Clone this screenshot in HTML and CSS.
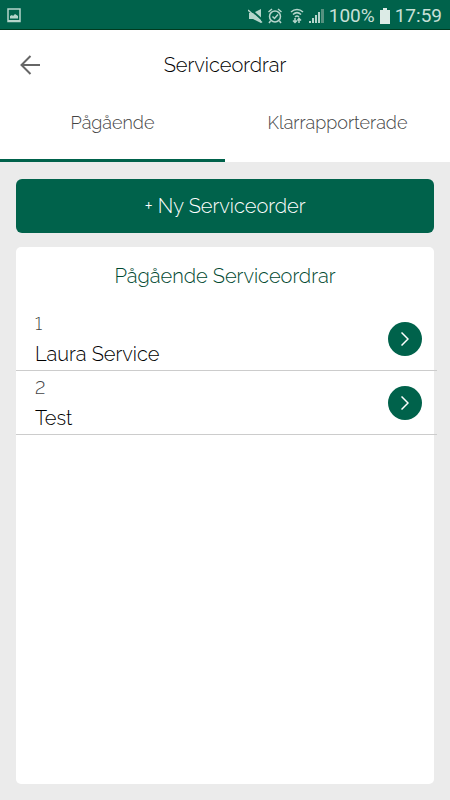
FILE: index.html
```html
<!DOCTYPE html>
<html lang="sv">
<head>
    <meta charset="UTF-8">
    <meta name="viewport" content="width=device-width, initial-scale=1.0">
    <title>Serviceordrar</title>
    <link rel="stylesheet" href="styles.css">
</head>
<body>
    <div class="statusbar">
        <svg class="shot" width="14" height="15" viewBox="0 0 14 15">
            <path d="M1 1h12v12.500H1z" fill="none" stroke="#b5d5cb" stroke-width="1.500"/>
            <path d="M1 12h12v2H1zM3 10.500V8l2-1 1 1 2-2 1.500 1L11 8v2.500z" fill="#b5d5cb"/>
        </svg>
        <div class="status-icons">
            <svg width="15" height="16" viewBox="0 0 15 16">
                <path d="M1 5h4l8-4v14L5 11H1z" fill="#b5d5cb"/>
                <path d="M2 1l13 11.500" stroke="#00624b" stroke-width="2"/>
                <path d="M0 2l14 12.500" stroke="#b5d5cb" stroke-width="1.500"/>
            </svg>
            <svg width="14" height="16" viewBox="0 0 14 16" fill="none" stroke="#b5d5cb" stroke-width="1.500">
                <circle cx="7" cy="8.500" r="5.500"/>
                <path d="M.5 4L4 1M13.500 4L10 1M2.500 13l-1.500 2M11.500 13l1.500 2M4.500 8.500l2 2 3.500-4"/>
            </svg>
            <svg class="wifi" width="14" height="16" viewBox="0 0 14 16" fill="none" stroke="#b5d5cb" stroke-width="1.500">
                <path d="M1 4c3.500-3.500 8.500-3.500 12 0M3 6.500c2.500-2.500 5.500-2.500 8 0M5 9c1.300-1.200 2.700-1.200 4 0"/>
                <path d="M5 10v4.500M3 12.500l2 2 2-2M9 15v-4.500M7.500 12.500l1.500-2 2 2"/>
            </svg>
            <svg width="15" height="16" viewBox="0 0 15 16">
                <path d="M0 13h2v2H0zM3 10h2v5H3zM6 7h2v8H6zM9 4h2v11H9z" fill="#b5d5cb"/>
                <path d="M12 1h3v14h-3z" fill="#55917f"/>
            </svg>
            <span class="percent">100%</span>
            <svg width="10" height="16" viewBox="0 0 10 16">
                <path d="M3 0h4v2h3v14H0V2h3z" fill="#dcebe6"/>
            </svg>
            <span class="clock">17:59</span>
        </div>
    </div>

    <header class="header">
        <button class="back" type="button" aria-label="Tillbaka">
            <svg width="20" height="20" viewBox="0 0 20 20" fill="none" stroke="#666" stroke-width="2">
                <path d="M20 10H1.500M10.500 1L1.500 10l9 9"/>
            </svg>
        </button>
        <h1>Serviceordrar</h1>
    </header>

    <nav class="tabs">
        <a class="tab active" href="#ongoing">Pågående</a>
        <a class="tab" href="#reported">Klarrapporterade</a>
    </nav>

    <main class="content">
        <button class="new-order" type="button">+ Ny Serviceorder</button>

        <section class="card" id="ongoing">
            <h2>Pågående Serviceordrar</h2>
            <ul class="orders">
                <li class="order">
                    <div>
                        <div class="number">1</div>
                        <div class="name">Laura Service</div>
                    </div>
                    <button class="open" type="button" aria-label="Öppna Laura Service">
                        <svg width="8" height="14" viewBox="0 0 8 14" fill="none" stroke="#fff" stroke-width="1.500">
                            <path d="M.5 .5L7 7 .5 13.500"/>
                        </svg>
                    </button>
                </li>
                <li class="order">
                    <div>
                        <div class="number">2</div>
                        <div class="name">Test</div>
                    </div>
                    <button class="open" type="button" aria-label="Öppna Test">
                        <svg width="8" height="14" viewBox="0 0 8 14" fill="none" stroke="#fff" stroke-width="1.500">
                            <path d="M.5 .5L7 7 .5 13.500"/>
                        </svg>
                    </button>
                </li>
            </ul>
        </section>
    </main>
</body>
</html>
```

FILE: styles.css
```css
* {
    box-sizing: border-box;
}

body {
    font-family: Raleway, Lato, sans-serif;
    font-weight: 300;
    background-color: #ebebeb;
    color: #000000;
    margin: 0;
    min-height: 100vh;
    display: flex;
    flex-direction: column;
}

h1,
h2 {
    margin: 0;
    font-weight: 300;
}

button {
    padding: 0;
    border: none;
    font: inherit;
    cursor: pointer;
}

svg {
    display: block;
}

.statusbar {
    display: flex;
    justify-content: space-between;
    align-items: center;
    height: 30px;
    padding: 2px 8px 0 7px;
    background-color: #00624b;
    border-bottom: 1px solid #003b20;
    color: #c8e0d8;
    font-family: Roboto, sans-serif;
    font-size: 19px;
    font-weight: 400;
}

.status-icons {
    display: flex;
    align-items: center;
    gap: 5px;
}

.wifi {
    margin-left: 3px;
}

.header {
    display: grid;
    grid-template-columns: 20px 1fr 20px;
    align-items: center;
    height: 70px;
    padding: 0 20px;
    background-color: #ffffff;
}

.back {
    background: none;
}

.header h1 {
    font-size: 20px;
    text-align: center;
}

.tabs {
    display: flex;
    background-color: #ffffff;
}

.tab {
    flex: 1;
    height: 62px;
    padding-top: 11px;
    border-bottom: 3px solid transparent;
    color: #444444;
    font-size: 18px;
    line-height: 24px;
    text-align: center;
    text-decoration: none;
}

.tab.active {
    border-bottom-color: #00624b;
}

.content {
    flex: 1;
    display: flex;
    flex-direction: column;
    gap: 14px;
    padding: 17px 16px 16px;
}

.new-order {
    height: 54px;
    border-radius: 6px;
    background-color: #00624b;
    color: #ffffff;
    font-size: 20px;
}

.card {
    flex: 1;
    padding-top: 15px;
    border-radius: 5px;
    background-color: #ffffff;
}

.card h2 {
    color: #00482f;
    font-size: 20px;
    line-height: 28px;
    text-align: center;
}

/* the row lines run slightly past the card */
.orders {
    list-style: none;
    margin: 17px -3px 0 0;
    padding: 0;
}

.order {
    display: flex;
    justify-content: space-between;
    align-items: center;
    height: 64px;
    padding: 0 15px 0 19px;
    border-bottom: 1px solid #cccccc;
}

.number {
    color: #444444;
    font-size: 18px;
    font-variant-numeric: lining-nums;
    line-height: 30px;
}

.name {
    font-size: 20px;
    line-height: 30px;
}

.open {
    display: flex;
    justify-content: center;
    align-items: center;
    width: 34px;
    height: 34px;
    border-radius: 50%;
    background-color: #00624b;
}
```
